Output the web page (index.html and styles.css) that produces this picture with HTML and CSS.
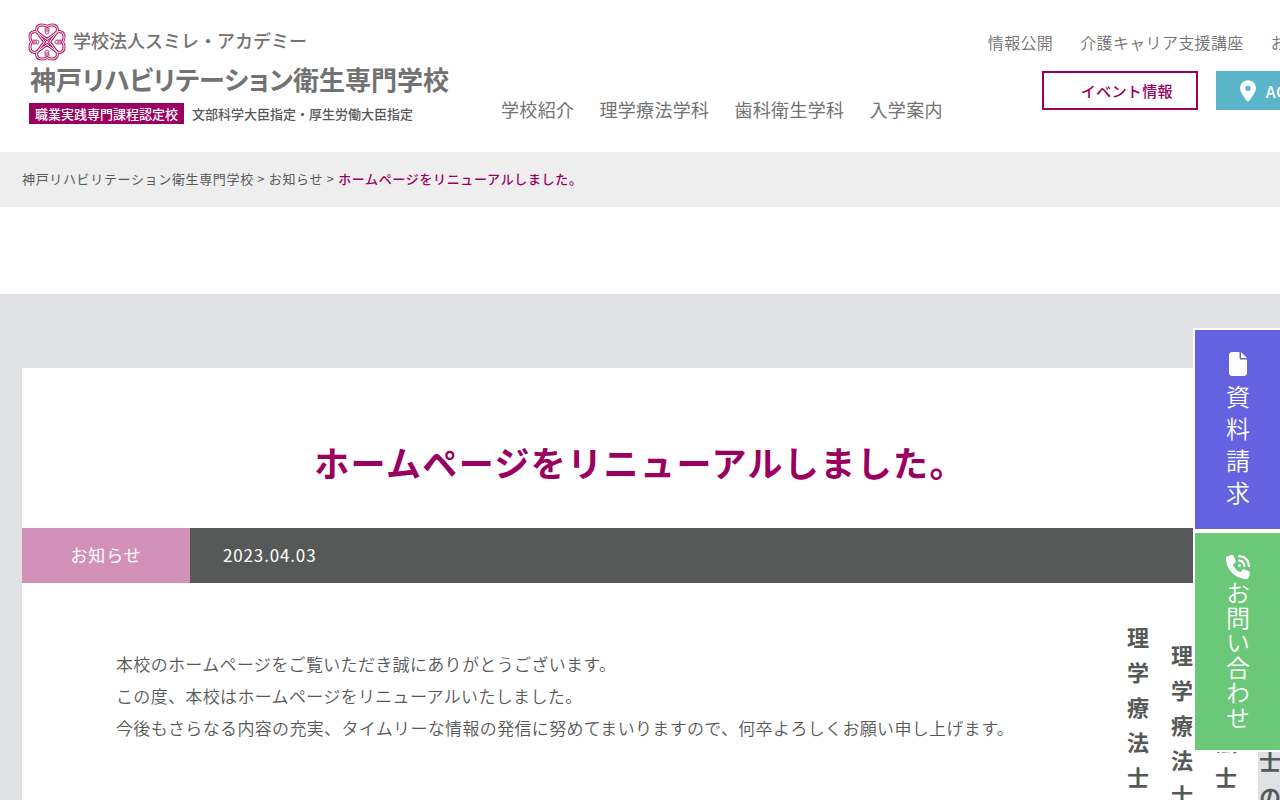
FILE: index.html
```html
<!DOCTYPE html>
<html lang="ja">
<head>
<meta charset="utf-8">
<meta name="viewport" content="width=device-width, initial-scale=1">
<title>ホームページをリニューアルしました。</title>
<link rel="stylesheet" href="styles.css">
</head>
<body>
<header class="header">
  <a class="logo" href="#">
    <span class="logo-top">
      <svg class="emblem" viewBox="-19 -19 38 38" aria-hidden="true">
        <defs>
          <path id="petal" d="M0 -2.500 L-7.800 -8.300 C-12 -10.500 -11 -17 -5.500 -17 C-3 -17 -1 -16.500 0 -15.500 C1 -16.500 3 -17 5.500 -17 C11 -17 12 -10.500 7.800 -8.300 Z"/>
          <path id="bud" d="M-1.800 -14.500 V-10 C-1.800 -7.500 1.800 -7.500 1.800 -10 V-14.500 M0 -14 V-10"/>
          <g id="flower"><use href="#petal"/><use href="#petal" transform="rotate(90)"/><use href="#petal" transform="rotate(180)"/><use href="#petal" transform="rotate(270)"/></g>
        </defs>
        <use href="#flower" class="line-outer"/>
        <use href="#flower" class="line-inner"/>
        <g class="line-bud"><use href="#bud"/><use href="#bud" transform="rotate(90)"/><use href="#bud" transform="rotate(180)"/><use href="#bud" transform="rotate(270)"/></g>
      </svg>
      <span class="logo-group">学校法人スミレ・アカデミー</span>
    </span>
    <span class="logo-name">神戸リハビリテーション衛生専門学校</span>
    <span class="logo-bottom"><span class="logo-badge">職業実践専門課程認定校</span><span class="logo-note">文部科学大臣指定・厚生労働大臣指定</span></span>
  </a>
  <nav class="main-nav">
    <a href="#">学校紹介</a><a href="#">理学療法学科</a><a href="#">歯科衛生学科</a><a href="#">入学案内</a>
  </nav>
  <div class="header-side">
    <nav class="sub-nav"><a href="#">情報公開</a><a href="#">介護キャリア支援講座</a><a href="#">お問い合わせ</a></nav>
    <div class="header-buttons">
      <a class="btn-event" href="#">イベント情報</a>
      <a class="btn-access" href="#"><svg class="pin" viewBox="0 0 384 512" aria-hidden="true"><path d="M215.700 499.200C267 435 384 279.400 384 192C384 86 298 0 192 0S0 86 0 192c0 87.400 117 243 168.300 307.200c12.300 15.300 35.100 15.300 47.400 0zM192 128a64 64 0 1 1 0 128 64 64 0 1 1 0-128z"/></svg>ACCESS</a>
    </div>
  </div>
</header>
<nav class="breadcrumb"><a href="#">神戸リハビリテーション衛生専門学校</a> &gt; <a href="#">お知らせ</a> &gt; <span class="current">ホームページをリニューアルしました。</span></nav>
<main class="main">
  <article class="card">
    <h1 class="title">ホームページをリニューアルしました。</h1>
    <div class="meta"><a class="category" href="#">お知らせ</a><time class="date" datetime="2023-04-03">2023.04.03</time></div>
    <div class="body">
      <p>本校のホームページをご覧いただき誠にありがとうございます。</p>
      <p>この度、本校はホームページをリニューアルいたしました。</p>
      <p>今後もさらなる内容の充実、タイムリーな情報の発信に努めてまいりますので、何卒よろしくお願い申し上げます。</p>
    </div>
  </article>
  <div class="floating-words">
    <span>理学療法士</span><span class="low">理学療法士</span><span>理学療法士</span><span class="high">理学療法士の</span>
  </div>
</main>
<aside class="side-links">
  <a class="side-link request" href="#"><svg class="side-icon" viewBox="0 0 384 512" aria-hidden="true"><path d="M0 64C0 28.700 28.700 0 64 0H224V128c0 17.700 14.300 32 32 32H384V448c0 35.300-28.700 64-64 64H64c-35.300 0-64-28.700-64-64V64zm384 64H256V0L384 128z"/></svg><span>資料請求</span></a>
  <a class="side-link contact" href="#"><svg class="side-icon" viewBox="0 0 512 512" aria-hidden="true"><path d="M280 0C408.100 0 512 103.900 512 232c0 13.300-10.700 24-24 24s-24-10.700-24-24c0-101.600-82.400-184-184-184c-13.300 0-24-10.700-24-24s10.700-24 24-24zm8 192a32 32 0 1 1 0 64 32 32 0 1 1 0-64zm-32-72c0-13.300 10.700-24 24-24c75.100 0 136 60.900 136 136c0 13.300-10.700 24-24 24s-24-10.700-24-24c0-48.600-39.400-88-88-88c-13.300 0-24-10.700-24-24zM117.500 1.400c19.400-5.300 39.700 4.600 47.400 23.200l40 96c6.800 16.300 2.100 35.200-11.600 46.300L144 207.300c33.300 70.400 90.300 127.400 160.700 160.700L345 318.700c11.200-13.700 30-18.400 46.300-11.600l96 40c18.600 7.700 28.500 28 23.200 47.400l-24 88C481.800 499.900 466 512 448 512C200.600 512 0 311.400 0 64C0 46 12.100 30.200 29.500 25.400l88-24z"/></svg><span>お問い合わせ</span></a>
</aside>
</body>
</html>
```

FILE: styles.css
```css
:root {
  --brand: #9a005f;
  --gray: #727272;
  --dark: #575958;
}

* { box-sizing: border-box; }

body {
  margin: 0;
  min-height: 100vh;
  display: flex;
  flex-direction: column;
  overflow: hidden;
  background: #fff;
  color: var(--dark);
  font-family: "Noto Sans CJK JP", sans-serif;
  font-size: 17px;
  letter-spacing: 0.02em;
}

a { color: inherit; text-decoration: none; }

.header {
  display: flex;
  align-items: flex-start;
  padding: 23px 0 28px 28px;
  color: var(--gray);
  white-space: nowrap;
}
.header > * { flex: none; }

.logo { display: block; width: 423px; letter-spacing: 0; }
.logo-top { display: flex; align-items: center; gap: 7px; height: 38px; }
.emblem { width: 38px; height: 38px; fill: none; }
.line-outer { stroke: #b0206f; stroke-width: 3; }
.line-inner { stroke: #fff; stroke-width: 1; }
.line-bud { stroke: #b0206f; stroke-width: 1; }
.logo-group { font-size: 18px; font-weight: 500; line-height: 34px; padding-bottom: 4px; }
.logo-name {
  display: block;
  padding-left: 2px;
  font-size: 26px;
  font-weight: 700;
  line-height: 36px;
  font-feature-settings: "palt";
}
.logo-bottom { display: flex; align-items: center; gap: 8px; font-size: 13px; line-height: 21px; font-weight: 500; margin: 6px 0 0 1px; }
.logo-badge { background: var(--brand); color: #fff; padding: 0 6px; }
.logo-note { color: var(--dark); }

.main-nav {
  display: flex;
  gap: 25px;
  margin: 72px 0 0 50px;
  font-size: 18px;
  line-height: 28px;
  font-weight: 400;
}

.header-side { margin-left: 45px; }
.sub-nav { display: flex; gap: 27px; margin-top: 7px; font-size: 16px; line-height: 24px; font-weight: 350; }
.header-buttons { display: flex; gap: 18px; margin: 17px 0 0 54px; }
.btn-event, .btn-access { display: flex; align-items: center; height: 39px; font-size: 15px; font-weight: 500; }
.btn-event { border: 2px solid var(--brand); color: var(--brand); padding: 0 24px 0 37px; width: 156px; }
.btn-access { background: #5bb5c8; color: #fff; padding: 0 24px; gap: 10px; font-size: 16px; }
.pin { width: 16px; height: 22px; fill: currentColor; }

.breadcrumb { background: #eee; padding: 17px 22px 19px; font-size: 13px; line-height: 19px; letter-spacing: 0.05em; white-space: nowrap; }
.current { color: var(--brand); font-weight: 500; }

.main { position: relative; flex: 1; margin-top: 87px; padding: 74px 22px 0; background: #e0e1e5; }
.card { background: #fff; padding-bottom: 74px; }
.title { margin: 0; padding: 64px 24px 36px; text-align: center; color: var(--brand); font-size: 35px; line-height: 60px; font-weight: 700; letter-spacing: 0.04em; }
.meta { display: flex; background: var(--dark); color: #fff; line-height: 53px; padding-bottom: 2px; letter-spacing: 0.05em; }
.category { width: 168px; margin-bottom: -2px; background: #d291b9; text-align: center; }
.date { padding-left: 33px; }
.body { padding: 65px 94px 0; font-weight: 350; }
.body p { margin: 0; line-height: 32px; }

.floating-words {
  position: absolute;
  top: 333px;
  right: -7px;
  display: flex;
  gap: 10px;
  font-size: 22px;
  line-height: 34px;
  font-weight: 700;
  letter-spacing: 13px;
  white-space: nowrap;
}
.floating-words span { writing-mode: vertical-rl; }
.floating-words .low { padding-top: 18px; }
.floating-words .high { margin-top: -16px; }

.side-links { position: fixed; top: 328px; right: 0; width: 87px; }
.side-link {
  display: flex;
  flex-direction: column;
  align-items: center;
  border: 2px solid #fff;
  border-right: 0;
  color: #fff;
  font-size: 24px;
  font-weight: 350;
  line-height: 36px;
}
.side-link span { writing-mode: vertical-rl; }
.side-icon { height: 24px; fill: currentColor; }
.request { background: #6462e0; padding: 22px 0 16px; gap: 9px; }
.request span { letter-spacing: 8px; }
.contact { background: #6bc878; padding: 22px 0 19px; gap: 2px; }
.contact span { letter-spacing: 1px; }
```
